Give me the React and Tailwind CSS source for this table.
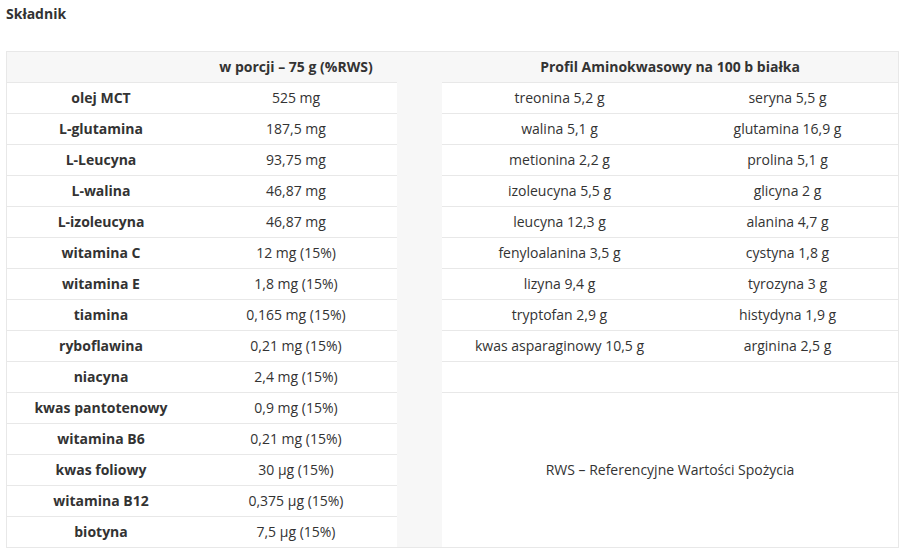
const left = [
  ['olej MCT', '525 mg'],
  ['L-glutamina', '187,5 mg'],
  ['L-Leucyna', '93,75 mg'],
  ['L-walina', '46,87 mg'],
  ['L-izoleucyna', '46,87 mg'],
  ['witamina C', '12 mg (15%)'],
  ['witamina E', '1,8 mg (15%)'],
  ['tiamina', '0,165 mg (15%)'],
  ['ryboflawina', '0,21 mg (15%)'],
  ['niacyna', '2,4 mg (15%)'],
  ['kwas pantotenowy', '0,9 mg (15%)'],
  ['witamina B6', '0,21 mg (15%)'],
  ['kwas foliowy', '30 µg (15%)'],
  ['witamina B12', '0,375 µg (15%)'],
  ['biotyna', '7,5 µg (15%)'],
];

const amino = [
  ['treonina 5,2 g', 'seryna 5,5 g'],
  ['walina 5,1 g', 'glutamina 16,9 g'],
  ['metionina 2,2 g', 'prolina 5,1 g'],
  ['izoleucyna 5,5 g', 'glicyna 2 g'],
  ['leucyna 12,3 g', 'alanina 4,7 g'],
  ['fenyloalanina 3,5 g', 'cystyna 1,8 g'],
  ['lizyna 9,4 g', 'tyrozyna 3 g'],
  ['tryptofan 2,9 g', 'histydyna 1,9 g'],
  ['kwas asparaginowy 10,5 g', 'arginina 2,5 g'],
  ['', ''],
];

const row = 'flex h-[31px] pb-[2px] border-b border-[#e8e8e8]';
const cell = 'flex items-center justify-center';

export default function App() {
  return (
    <div className="min-h-screen bg-white text-[14px] text-[#333] font-['Open_Sans',sans-serif]">
      <div className="px-[6px] pt-[4px] h-[51px]">
        <h3 className="font-bold leading-[20px] text-[#333]">Składnik</h3>
      </div>
      <div className="ml-[6px] w-[893px] flex border-t border-l border-r border-[#e8e8e8]">
        {/* left part */}
        <div className="w-[390px] flex flex-col">
          <div className={`${row} bg-[#f7f7f7] font-bold`}>
            <div className="w-[188px]" />
            <div className={`${cell} flex-1`}>w porcji – 75 g (%RWS)</div>
          </div>
          {left.map(([name, val]) => (
            <div key={name} className={row}>
              <div className={`${cell} w-[188px] font-bold`}>{name}</div>
              <div className={`${cell} flex-1`}>{val}</div>
            </div>
          ))}
        </div>

        {/* spacer */}
        <div className="w-[45px] bg-[#f7f7f7] border-b border-[#e8e8e8]" />

        {/* right part */}
        <div className="flex-1 flex flex-col">
          <div className={`${row} ${cell} bg-[#f7f7f7] font-bold`}>Profil Aminokwasowy na 100 b białka</div>
          {amino.map(([a, b], i) => (
            <div key={i} className={row}>
              <div className={`${cell} w-[235px]`}>{a}</div>
              <div className={`${cell} flex-1`}>{b}</div>
            </div>
          ))}
          <div className={`${cell} h-[155px] pb-[2px] border-b border-[#e8e8e8]`}>RWS – Referencyjne Wartości Spożycia</div>
        </div>
      </div>
    </div>
  );
}
